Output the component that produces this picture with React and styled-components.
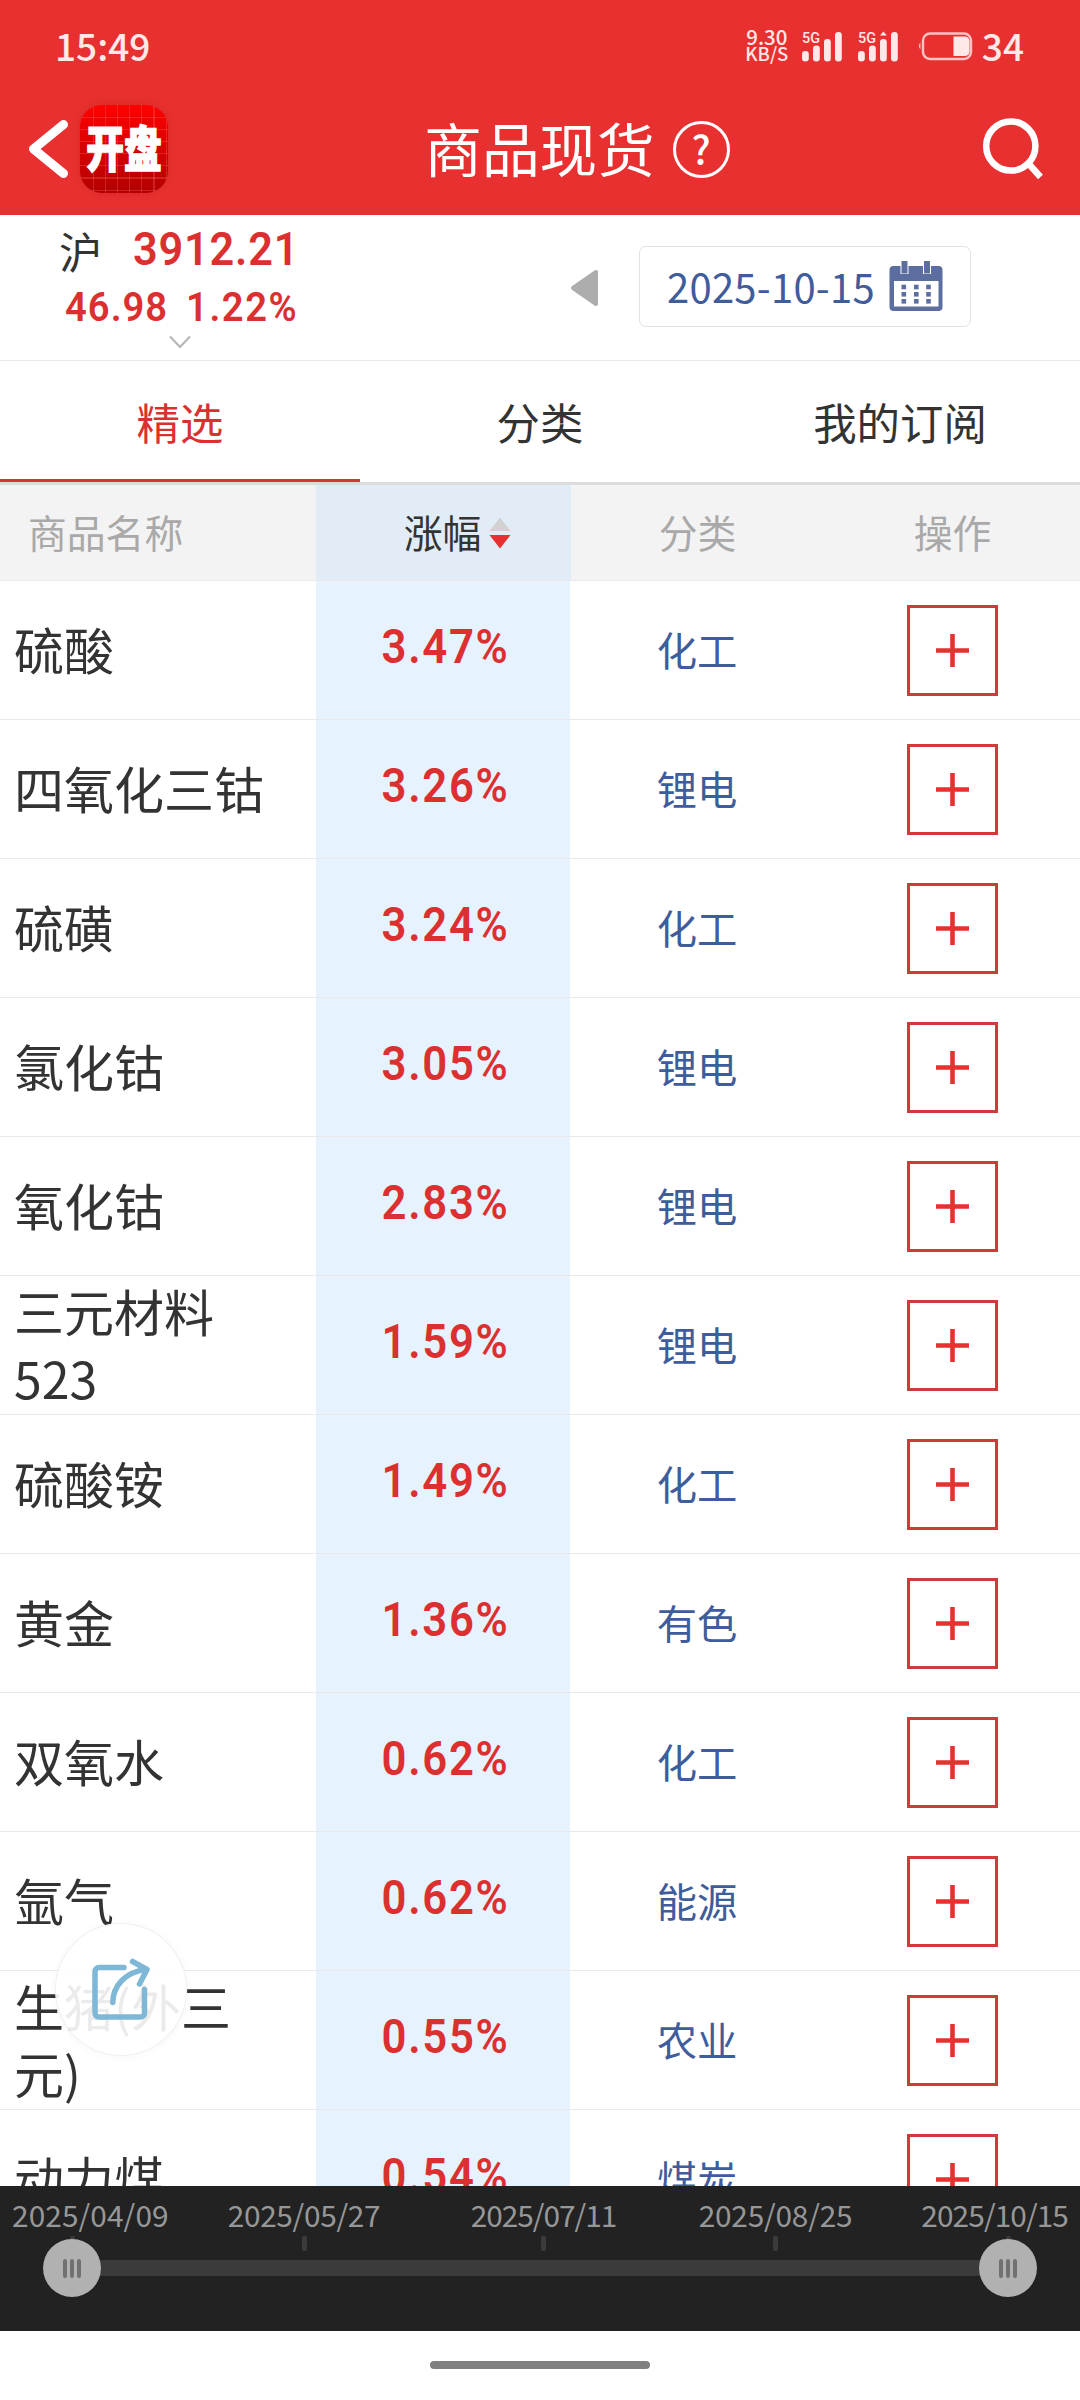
import React from "react";
import styled, { createGlobalStyle } from "styled-components";

const brandRed = "#e83030";
const upRed = "#dc3030";
const linkBlue = "#3f5c9c";
const lineColor = "#e9e9e9";

const GlobalStyle = createGlobalStyle`
  * {
    box-sizing: border-box;
  }

  body {
    margin: 0;
    background: #fff;
    font-family: "Noto Sans CJK SC", "Noto Sans", sans-serif;
    color: #333;
  }
`;

const Page = styled.div`
  width: 1080px;
  height: 2400px;
  display: flex;
  flex-direction: column;
  overflow: hidden;
  background: #fff;
`;

const Header = styled.header`
  height: 215px;
  flex: none;
  background: ${brandRed};
  color: #fff;
`;

const StatusBar = styled.div`
  height: 88px;
  padding: 5px 56px 0 55px;
  display: flex;
  align-items: center;
  justify-content: space-between;
  color: #ffe8e8;
`;

const Clock = styled.span`
  margin-top: -4px;
  font-size: 37px;
  line-height: 40px;
  font-weight: 500;
`;

const StatusIcons = styled.div`
  display: flex;
  align-items: center;
`;

const NetSpeed = styled.div`
  width: 44px;
  margin: -3px 13px 0 0;
  font-size: 20.5px;
  line-height: 17px;
  font-weight: 500;
  text-align: center;
`;

const SpeedUnit = styled.div`
  font-size: 18.5px;
`;

const SignalBox = styled.svg`
  width: 42px;
  height: 32px;
  margin: -2px 14px 0 0;
`;

const BatteryIcon = styled.svg`
  width: 56px;
  height: 32px;
  margin: -2px 9px 0 3px;
`;

const NavBar = styled.div`
  height: 124px;
  padding: 0 34px 0 26px;
  display: grid;
  grid-template-columns: 200px 1fr 200px;
  align-items: center;
`;

const NavLeft = styled.div`
  display: flex;
  align-items: center;
  margin-top: -2px;
`;

const BackIcon = styled.svg`
  width: 46px;
  height: 66px;
  margin-right: 8px;
`;

const AppLogo = styled.div`
  width: 88px;
  height: 88px;
  display: flex;
  align-items: center;
  justify-content: center;
  border-radius: 22px;
  background:
    repeating-linear-gradient(90deg, transparent 0 11px, rgba(255, 120, 120, 0.28) 11px 12.1px) 2px 0,
    repeating-linear-gradient(180deg, transparent 0 11px, rgba(255, 120, 120, 0.28) 11px 12.1px) 0 1px,
    linear-gradient(#ff0000, #b20000);
  box-shadow: 0 0 8px rgba(150, 0, 0, 0.2);
`;

const LogoText = styled.span`
  flex: none;
  margin: -6px 0 0;
  font-size: 49px;
  line-height: 88px;
  font-weight: 900;
  -webkit-text-stroke: 1.5px #fff;
  transform: scaleX(0.77);
`;

const TitleGroup = styled.div`
  display: flex;
  align-items: center;
  justify-content: center;
  gap: 18px;
  padding-left: 82px;
`;

const Title = styled.h1`
  margin: -6px 0 0;
  font-size: 57.6px;
  line-height: 66px;
  font-weight: 400;
  white-space: nowrap;
`;

const HelpBadge = styled.span`
  width: 57px;
  height: 57px;
  margin-top: -2px;
  padding-bottom: 3px;
  display: flex;
  align-items: center;
  justify-content: center;
  border: 3.5px solid #fff;
  border-radius: 50%;
  font-size: 39px;
  line-height: 40px;
  font-weight: 500;
`;

const SearchIcon = styled.svg`
  width: 66px;
  height: 66px;
  margin-top: -3px;
  justify-self: end;
`;

const IndexBar = styled.section`
  height: 146px;
  flex: none;
  display: flex;
  border-bottom: 1px solid ${lineColor};
`;

const Quote = styled.div`
  width: 360px;
  padding: 10px 0 0 59px;
`;

const QuoteRow = styled.div`
  display: flex;
  align-items: center;
  height: ${({ $height }) => $height}px;
  padding-left: ${({ $indent }) => $indent || 0}px;
`;

const Market = styled.span`
  width: 74px;
  font-size: 43.2px;
  line-height: 50px;
`;

// narrow, widely set digits
const Num = styled.span`
  font-family: Roboto, "Liberation Sans", sans-serif;
  font-weight: 600;
  font-size: ${({ $size }) => $size}px;
  line-height: 1;
  letter-spacing: ${({ $spacing }) => $spacing || 0}px;
  color: ${upRed};
  transform: scaleX(0.92);
  transform-origin: ${({ $origin }) => $origin || "left"};
`;

const PointChange = styled(Num)`
  width: 121px;
`;

const Points = styled(Num)`
  margin-top: -4px;
`;

const MoreIcon = styled.svg`
  display: block;
  width: 24px;
  height: 14px;
  margin: -4px 0 0 109px;
`;

const DateNav = styled.div`
  flex: 1;
  display: flex;
  align-items: center;
  padding-left: 209px;
`;

const PrevIcon = styled.svg`
  width: 30px;
  height: 40px;
  margin-right: 40px;
`;

const DateBox = styled.div`
  width: 332px;
  height: 81px;
  margin-top: -2px;
  padding-left: 27px;
  display: flex;
  align-items: center;
  gap: 14px;
  border: 1px solid #e2e2e2;
  border-radius: 7px;
  color: ${linkBlue};
`;

const DateText = styled.span`
  margin-top: -2px;
  font-size: 40px;
  line-height: 50px;
  letter-spacing: 0.25px;
`;

const CalendarSvg = styled.svg`
  width: 54px;
  height: 50px;
  margin-top: -1px;
  flex: none;
`;

const Tabs = styled.nav`
  height: 124px;
  flex: none;
  display: grid;
  grid-template-columns: repeat(3, 1fr);
  border-bottom: 3px solid #dcdcdc;
`;

const Tab = styled.a`
  display: flex;
  align-items: center;
  justify-content: center;
  padding-top: 2px;
  font-size: 43.4px;
  line-height: 60px;
  color: ${({ $active }) => ($active ? upRed : "#333")};
  border-bottom: 3px solid ${({ $active }) => ($active ? "#d73438" : "transparent")};
`;

const Row = styled.div`
  height: 139px;
  flex: none;
  display: grid;
  grid-template-columns: 316px 254px 255px 255px;
  border-bottom: 1px solid ${lineColor};
  background: linear-gradient(90deg, #fff 316px, #e6f2fe 316px 570px, #fff 570px);
`;

const HeadRow = styled(Row)`
  height: 96px;
  padding-bottom: 4px;
  background: linear-gradient(90deg, #f3f3f3 316px, #e1ecf7 316px 571px, #f3f3f3 571px);
  font-size: 38.8px;
  line-height: 50px;
  color: #a9a9a9;
`;

const Cell = styled.div`
  display: flex;
  align-items: center;
  justify-content: center;
`;

const HeadName = styled(Cell)`
  justify-content: flex-start;
  padding-left: 28px;
`;

const SortCell = styled(Cell)`
  gap: 8px;
  padding-left: 29px;
  color: #333;
`;

const SortIcon = styled.svg`
  width: 22px;
  height: 32px;
  margin-top: 4px;
`;

const NameCell = styled(Cell)`
  justify-content: flex-start;
  padding: 0 40px 2px 14px;
  font-size: 50px;
  line-height: 67.5px;
`;

const RateCell = styled(Cell)`
  padding: 0 0 5px 5px;
`;

const CategoryCell = styled(Cell)`
  padding: 0 1px 3px 0;
  font-size: 40.3px;
  line-height: 50px;
  color: ${linkBlue};
`;

const AddButton = styled.button`
  width: 91px;
  height: 91px;
  padding: 0;
  display: flex;
  align-items: center;
  justify-content: center;
  border: 3px solid #d13a3a;
  background: #fff;
`;

const List = styled.main`
  flex: 1;
  min-height: 0;
  overflow: hidden;
  position: relative;
`;

const ShareButton = styled.button`
  position: absolute;
  left: 55px;
  top: 1342px;
  width: 132px;
  height: 133px;
  padding: 0;
  border: 1px solid #f0f0f0;
  border-radius: 50%;
  background: rgba(255, 255, 255, 0.9);
  box-shadow: 0 1px 8px rgba(0, 0, 0, 0.04);
`;

const ShareSvg = styled.svg`
  display: block;
  width: 64px;
  height: 68px;
  margin: 1px 0 0 33px;
`;

const Timeline = styled.footer`
  height: 145px;
  flex: none;
  background: #222;
`;

const TimelineGrid = styled.div`
  display: grid;
  grid-template-columns: 173px 238px 241px 223px 181px;
  padding: 0 12px;
  justify-items: center;

  > :first-child {
    justify-self: start;
  }

  > :last-child {
    justify-self: end;
  }
`;

const Labels = styled(TimelineGrid)`
  height: 50px;
  align-items: center;
  padding-top: 6px;
  color: #979797;
  font-size: 29.8px;
  line-height: 36px;
`;

const DateLabel = styled.span`
  letter-spacing: ${({ $spacing }) => $spacing}px;
`;

const Ticks = styled(TimelineGrid)`
  padding: 0 69.5px 0 69.5px;
  grid-template-columns: 115.5px 238px 241px 223px 123.5px;
`;

const Tick = styled.i`
  width: 5px;
  height: 15px;
  border-radius: 2px;
  background: #3b3b3b;
`;

const Slider = styled.div`
  display: flex;
  align-items: center;
  margin-top: -12px;
  padding: 0 43px;
`;

const Bar = styled.div`
  flex: 1;
  height: 16px;
  margin: 0 -4px;
  background: #3b3b3b;
`;

const Handle = styled.div`
  position: relative;
  width: 58px;
  height: 58px;
  display: flex;
  align-items: center;
  justify-content: center;
  gap: 3px;
  border-radius: 50%;
  background: #b1b1b1;
`;

const Grip = styled.i`
  width: 4px;
  height: 19px;
  border-radius: 2px;
  background: #717171;
`;

const GestureArea = styled.div`
  height: 69px;
  flex: none;
  padding-top: 30px;
`;

const GestureBar = styled.div`
  width: 220px;
  height: 8px;
  margin: 0 auto;
  border-radius: 4px;
  background: #808080;
`;

const goods = [
  { name: "硫酸", rate: "3.47%", category: "化工" },
  { name: "四氧化三钴", rate: "3.26%", category: "锂电" },
  { name: "硫磺", rate: "3.24%", category: "化工" },
  { name: "氯化钴", rate: "3.05%", category: "锂电" },
  { name: "氧化钴", rate: "2.83%", category: "锂电" },
  { name: "三元材料523", rate: "1.59%", category: "锂电" },
  { name: "硫酸铵", rate: "1.49%", category: "化工" },
  { name: "黄金", rate: "1.36%", category: "有色" },
  { name: "双氧水", rate: "0.62%", category: "化工" },
  { name: "氩气", rate: "0.62%", category: "能源" },
  { name: "生猪(外三元)", rate: "0.55%", category: "农业" },
  { name: "动力煤", rate: "0.54%", category: "煤炭" },
];

const dates = [
  { text: "2025/04/09", spacing: 0.1 },
  { text: "2025/05/27", spacing: -0.3 },
  { text: "2025/07/11", spacing: -1 },
  { text: "2025/08/25", spacing: -0.2 },
  { text: "2025/10/15", spacing: -0.9 },
];

function Signal({ notch }) {
  return (
    <SignalBox viewBox="0 0 42 32" fill="#ffe8e8">
      <text x="0" y="12.5" fontFamily="Roboto" fontSize="15" fontWeight="500" textLength="18" lengthAdjust="spacingAndGlyphs">5G</text>
      <rect x="0" y="21" width="6.8" height="10.5" rx="3.2" />
      <rect x="11" y="15.5" width="6.8" height="16" rx="3.2" />
      <rect x="22" y="9" width="6.8" height="22.5" rx="3.2" />
      <rect x="33" y="2" width="6.8" height="29.5" rx="3.2" />
      {notch && <path d="M22 5.5 25.4 1.5 28.8 5.5Z" />}
    </SignalBox>
  );
}

function Battery() {
  return (
    <BatteryIcon viewBox="0 0 56 32">
      <path d="M3.4 12.6A5 5 0 0 0 3.4 19.4Z" fill="#fbc4c4" />
      <rect x="6" y="3.5" width="48" height="25.5" rx="7" fill="none" stroke="#fbc4c4" strokeWidth="2.4" />
      <path d="M36.5 6.5H48a4.5 4.5 0 0 1 4.5 4.5V21.5a4.5 4.5 0 0 1-4.5 4.5H36.5Z" fill="#ffe8e8" />
    </BatteryIcon>
  );
}

function Calendar() {
  return (
    <CalendarSvg viewBox="0 0 54 50" fill="#5c6e9f">
      <rect x="0.5" y="5" width="53" height="45" rx="4" />
      <rect x="5" y="20" width="44.5" height="25.5" fill="#fff" />
      <rect x="11.5" y="-1" width="8" height="14" fill="#fff" />
      <rect x="34" y="-1" width="8" height="14" fill="#fff" />
      <rect x="12.5" y="0" width="6" height="12.5" />
      <rect x="35" y="0" width="6" height="12.5" />
      {[12.5, 25, 37.2].map((x) =>
        [23.7, 31, 38].map((y) => <rect key={`${x}-${y}`} x={x} y={y} width="4.6" height="4.6" />)
      )}
    </CalendarSvg>
  );
}

function GoodsRow({ item }) {
  return (
    <Row>
      <NameCell>{item.name}</NameCell>
      <RateCell>
        <Num $size={47.5} $spacing={1.8} $origin="center">{item.rate}</Num>
      </RateCell>
      <CategoryCell>{item.category}</CategoryCell>
      <Cell>
        <AddButton aria-label="订阅">
          <svg width="33" height="33" viewBox="0 0 33 33" stroke="#e53130" strokeWidth="4.6">
            <path d="M0 16.5H33M16.5 0V33" />
          </svg>
        </AddButton>
      </Cell>
    </Row>
  );
}

function SliderHandle() {
  return (
    <Handle>
      <Grip />
      <Grip />
      <Grip />
    </Handle>
  );
}

export default function App() {
  return (
    <Page>
      <GlobalStyle />
      <Header>
        <StatusBar>
          <Clock>15:49</Clock>
          <StatusIcons>
            <NetSpeed>
              9.30
              <SpeedUnit>KB/S</SpeedUnit>
            </NetSpeed>
            <Signal />
            <Signal notch />
            <Battery />
            <Clock>34</Clock>
          </StatusIcons>
        </StatusBar>
        <NavBar>
          <NavLeft>
            <BackIcon viewBox="0 0 46 66" fill="none" stroke="#fff" strokeWidth="9" strokeLinecap="round" strokeLinejoin="round">
              <path d="M37.5 8.5 7.5 33 37.5 57.5" />
            </BackIcon>
            <AppLogo>
              <LogoText>开盘</LogoText>
            </AppLogo>
          </NavLeft>
          <TitleGroup>
            <Title>商品现货</Title>
            <HelpBadge>?</HelpBadge>
          </TitleGroup>
          <SearchIcon viewBox="0 0 66 66" fill="none" stroke="#fff" strokeWidth="6.5">
            <circle cx="30.8" cy="30" r="24.6" />
            <path d="M48 47 60.5 61" />
          </SearchIcon>
        </NavBar>
      </Header>

      <IndexBar>
        <Quote>
          <QuoteRow $height={50}>
            <Market>沪</Market>
            <Points $size={47} $spacing={0.9}>3912.21</Points>
          </QuoteRow>
          <QuoteRow $height={64} $indent={6}>
            <PointChange $size={41.5} $spacing={1.1}>46.98</PointChange>
            <Num $size={41.5} $spacing={1.7}>1.22%</Num>
          </QuoteRow>
          <MoreIcon viewBox="0 0 24 14" fill="none" stroke="#b4b4b4" strokeWidth="2">
            <path d="M2 1.5 12 12 22 1.5" />
          </MoreIcon>
        </Quote>
        <DateNav>
          <PrevIcon viewBox="0 0 30 40" fill="#adadad" stroke="#adadad" strokeWidth="4" strokeLinejoin="round">
            <path d="M27 4V36L4 20Z" />
          </PrevIcon>
          <DateBox>
            <DateText>2025-10-15</DateText>
            <Calendar />
          </DateBox>
        </DateNav>
      </IndexBar>

      <Tabs>
        <Tab $active>精选</Tab>
        <Tab>分类</Tab>
        <Tab>我的订阅</Tab>
      </Tabs>

      <HeadRow>
        <HeadName>商品名称</HeadName>
        <SortCell>
          涨幅
          <SortIcon viewBox="0 0 22 32">
            <path d="M0.5 14 11 0.5 21.5 14Z" fill="#d2d2d2" />
            <path d="M0.5 18H21.5L11 31.5Z" fill="#e83030" />
          </SortIcon>
        </SortCell>
        <Cell>分类</Cell>
        <Cell>操作</Cell>
      </HeadRow>

      <List>
        {goods.map((item) => (
          <GoodsRow key={item.name} item={item} />
        ))}
        <ShareButton aria-label="分享">
          <ShareSvg viewBox="0 0 64 68" fill="none" stroke="#7eb8d6" strokeWidth="5.5" strokeLinecap="round" strokeLinejoin="round">
            <path d="M35 11.5H10a4 4 0 0 0-4 4V57a4 4 0 0 0 4 4H51.5a4 4 0 0 0 4-4V33.5" />
            <path d="M23.8 46.5C24 30 36 16 57 13.5" />
            <path d="M43.5 5.5 58 13.5 50.5 28" />
          </ShareSvg>
        </ShareButton>
      </List>

      <Timeline>
        <Labels>
          {dates.map((d) => (
            <DateLabel key={d.text} $spacing={d.spacing}>{d.text}</DateLabel>
          ))}
        </Labels>
        <Ticks>
          {dates.map((d) => (
            <Tick key={d.text} />
          ))}
        </Ticks>
        <Slider>
          <SliderHandle />
          <Bar />
          <SliderHandle />
        </Slider>
      </Timeline>
      <GestureArea>
        <GestureBar />
      </GestureArea>
    </Page>
  );
}
